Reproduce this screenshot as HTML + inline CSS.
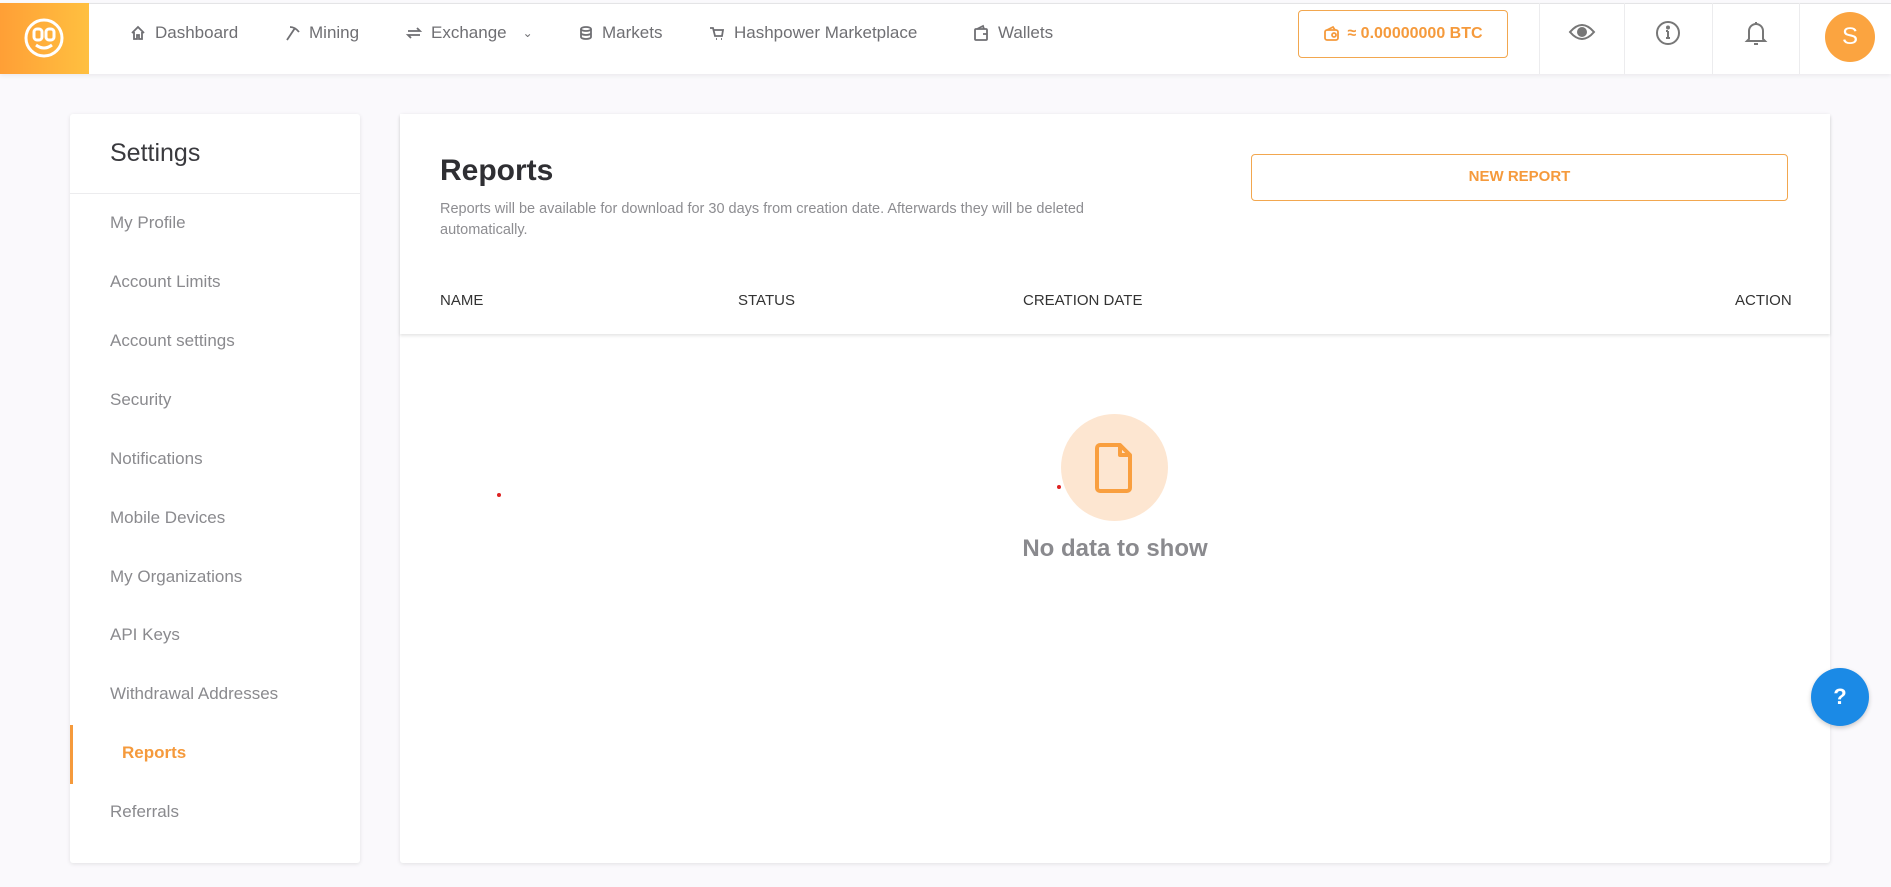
<!DOCTYPE html>
<html><head><meta charset="utf-8"><style>
*{box-sizing:border-box;margin:0;padding:0}
body{width:1891px;height:887px;background:#faf9fc;font-family:"Liberation Sans",sans-serif;position:relative;overflow:hidden}
.abs{position:absolute}
.hdr{left:0;top:3px;width:1891px;height:71px;background:#fff;border-top:1px solid #e4e4e6;box-shadow:0 2px 4px rgba(0,0,0,.06)}
.logo{left:0;top:3px;width:89px;height:71px;background:linear-gradient(90deg,#ff9f36,#ffc040)}
.nav{top:23px;font-size:17px;color:#6f6f73;display:flex;align-items:center;gap:8px}
.nav svg{stroke:#6f6f73;fill:none;stroke-width:1.8}
.btc{left:1298px;top:10px;width:210px;height:48px;border:1px solid #f2a74f;border-radius:4px;color:#f59a3c;font-size:16px;font-weight:bold;display:flex;align-items:center;justify-content:center;gap:6px}
.div{top:3px;width:1px;height:71px;background:#ececee}
.card{background:#fff;box-shadow:0 1px 4px rgba(0,0,0,.1);border-radius:3px}
.si{left:110px;font-size:17px;color:#8a8a8e}
.th{top:292px;font-size:15px;color:#333}
</style></head><body>
<div class="abs hdr"></div>
<div class="abs logo">
<svg class="abs" style="left:22px;top:13px" width="44" height="44" viewBox="0 0 44 44" fill="none" stroke="#fff" stroke-width="3"><circle cx="22" cy="22" r="18"/><rect x="12" y="13" width="8" height="11" rx="3"/><rect x="24" y="13" width="8" height="11" rx="3"/><path d="M14 29q8 6 16 0"/></svg>
</div>
<div class="abs nav" style="left:129px"><svg width="18" height="18" viewBox="0 0 18 18"><path d="M3 9L9 3l6 6M5 8v7h3v-4h2v4h3V8"/></svg>Dashboard</div>
<div class="abs nav" style="left:283px"><svg width="18" height="18" viewBox="0 0 18 18"><path d="M4 16L12 4M7 3q5 0 9 5"/></svg>Mining</div>
<div class="abs nav" style="left:405px"><svg width="18" height="18" viewBox="0 0 18 18"><path d="M3 7h12l-3-3M15 11H3l3 3"/></svg>Exchange <span style="font-size:12px;margin-left:8px">&#8964;</span></div>
<div class="abs nav" style="left:578px"><svg width="16" height="18" viewBox="0 0 16 18"><ellipse cx="8" cy="5" rx="5" ry="2"/><path d="M3 5v8c0 1 2 2 5 2s5-1 5-2V5M3 9c0 1 2 2 5 2s5-1 5-2"/></svg>Markets</div>
<div class="abs nav" style="left:708px"><svg width="18" height="18" viewBox="0 0 18 18"><path d="M2 4h3l2 8h7l1-6H6M8 15h1M13 15h1"/></svg>Hashpower Marketplace</div>
<div class="abs nav" style="left:972px"><svg width="18" height="18" viewBox="0 0 18 18"><rect x="3" y="5" width="12" height="11" rx="1"/><path d="M5 5l6-3 1 3M11 10h4"/></svg>Wallets</div>
<div class="abs btc"><svg width="18" height="18" viewBox="0 0 18 18" fill="none" stroke="#f59a3c" stroke-width="1.8"><rect x="2" y="5" width="13" height="10" rx="2"/><path d="M4 5l6-3 2 3"/><circle cx="11" cy="10" r="2"/></svg>≈ 0.00000000 BTC</div>
<div class="abs div" style="left:1539px"></div><div class="abs div" style="left:1624px"></div><div class="abs div" style="left:1712px"></div><div class="abs div" style="left:1799px"></div>
<svg class="abs" style="left:1568px;top:22px" width="28" height="20" viewBox="0 0 28 20"><path d="M2 10q12-14 24 0q-12 14-24 0z" fill="none" stroke="#777" stroke-width="2"/><circle cx="14" cy="10" r="5" fill="#777"/></svg>
<svg class="abs" style="left:1655px;top:20px" width="26" height="26" viewBox="0 0 26 26" fill="none" stroke="#777" stroke-width="2"><circle cx="13" cy="13" r="11"/><path d="M13 11v7M11 18h4M11 11h2"/><circle cx="13" cy="7.5" r="1" fill="#777"/></svg>
<svg class="abs" style="left:1744px;top:19px" width="24" height="28" viewBox="0 0 24 28" fill="none" stroke="#777" stroke-width="2"><path d="M12 3v2M5 20V12a7 7 0 0114 0v8l2 2H3zM10 25h4"/></svg>
<div class="abs" style="left:1825px;top:12px;width:50px;height:50px;border-radius:50%;background:#fba440;color:#fff;font-size:24px;text-align:center;line-height:50px">S</div>

<div class="abs card" style="left:70px;top:114px;width:290px;height:749px"></div>
<div class="abs" style="left:110px;top:139px;font-size:25px;color:#3a3a3e">Settings</div>
<div class="abs" style="left:70px;top:193px;width:290px;height:1px;background:#ececee"></div>
<div class="abs si" style="top:213px">My Profile</div>
<div class="abs si" style="top:272px">Account Limits</div>
<div class="abs si" style="top:331px">Account settings</div>
<div class="abs si" style="top:390px">Security</div>
<div class="abs si" style="top:449px">Notifications</div>
<div class="abs si" style="top:508px">Mobile Devices</div>
<div class="abs si" style="top:567px">My Organizations</div>
<div class="abs si" style="top:625px">API Keys</div>
<div class="abs si" style="top:684px">Withdrawal Addresses</div>
<div class="abs" style="left:70px;top:725px;width:3px;height:59px;background:#f59a3c"></div>
<div class="abs si" style="left:122px;top:743px;color:#f59a3c;font-weight:bold">Reports</div>
<div class="abs si" style="top:802px">Referrals</div>

<div class="abs card" style="left:400px;top:114px;width:1430px;height:749px"></div>
<div class="abs" style="left:400px;top:114px;width:1430px;height:220px;box-shadow:0 2px 3px rgba(0,0,0,.1);background:#fff"></div>
<div class="abs" style="left:440px;top:154px;font-size:30px;font-weight:bold;color:#2f2f33">Reports</div>
<div class="abs" style="left:440px;top:199px;width:700px;font-size:14.5px;line-height:21px;color:#8d8d91">Reports will be available for download for 30 days from creation date. Afterwards they will be deleted automatically.</div>
<div class="abs" style="left:1251px;top:154px;width:537px;height:47px;border:1.5px solid #f2a74f;border-radius:4px;color:#f59a3c;font-size:15px;font-weight:bold;text-align:center;line-height:44px">NEW REPORT</div>
<div class="abs th" style="left:440px">NAME</div>
<div class="abs th" style="left:738px">STATUS</div>
<div class="abs th" style="left:1023px">CREATION DATE</div>
<div class="abs th" style="left:1735px">ACTION</div>

<div class="abs" style="left:1061px;top:414px;width:107px;height:107px;border-radius:50%;background:#fde6d1"></div>
<svg class="abs" style="left:1095px;top:442px" width="38" height="52" viewBox="0 0 38 52" fill="none" stroke="#f99f3f" stroke-width="4" stroke-linejoin="round"><path d="M5 3h20l10 10v33a3 3 0 01-3 3H5a3 3 0 01-3-3V6a3 3 0 013-3zM25 3v10h10"/></svg>
<div class="abs" style="left:1000px;top:535px;width:230px;text-align:center;font-size:24px;font-weight:bold;color:#8a8a8e">No data to show</div>
<div class="abs" style="left:497px;top:493px;width:4px;height:4px;border-radius:50%;background:#d22"></div>
<div class="abs" style="left:1057px;top:485px;width:4px;height:4px;border-radius:50%;background:#d22"></div>

<div class="abs" style="left:1811px;top:668px;width:58px;height:58px;border-radius:50%;background:#1b8ae6;color:#fff;font-size:22px;font-weight:bold;text-align:center;line-height:58px;box-shadow:0 2px 5px rgba(0,0,0,.2)">?</div>
</body></html>
